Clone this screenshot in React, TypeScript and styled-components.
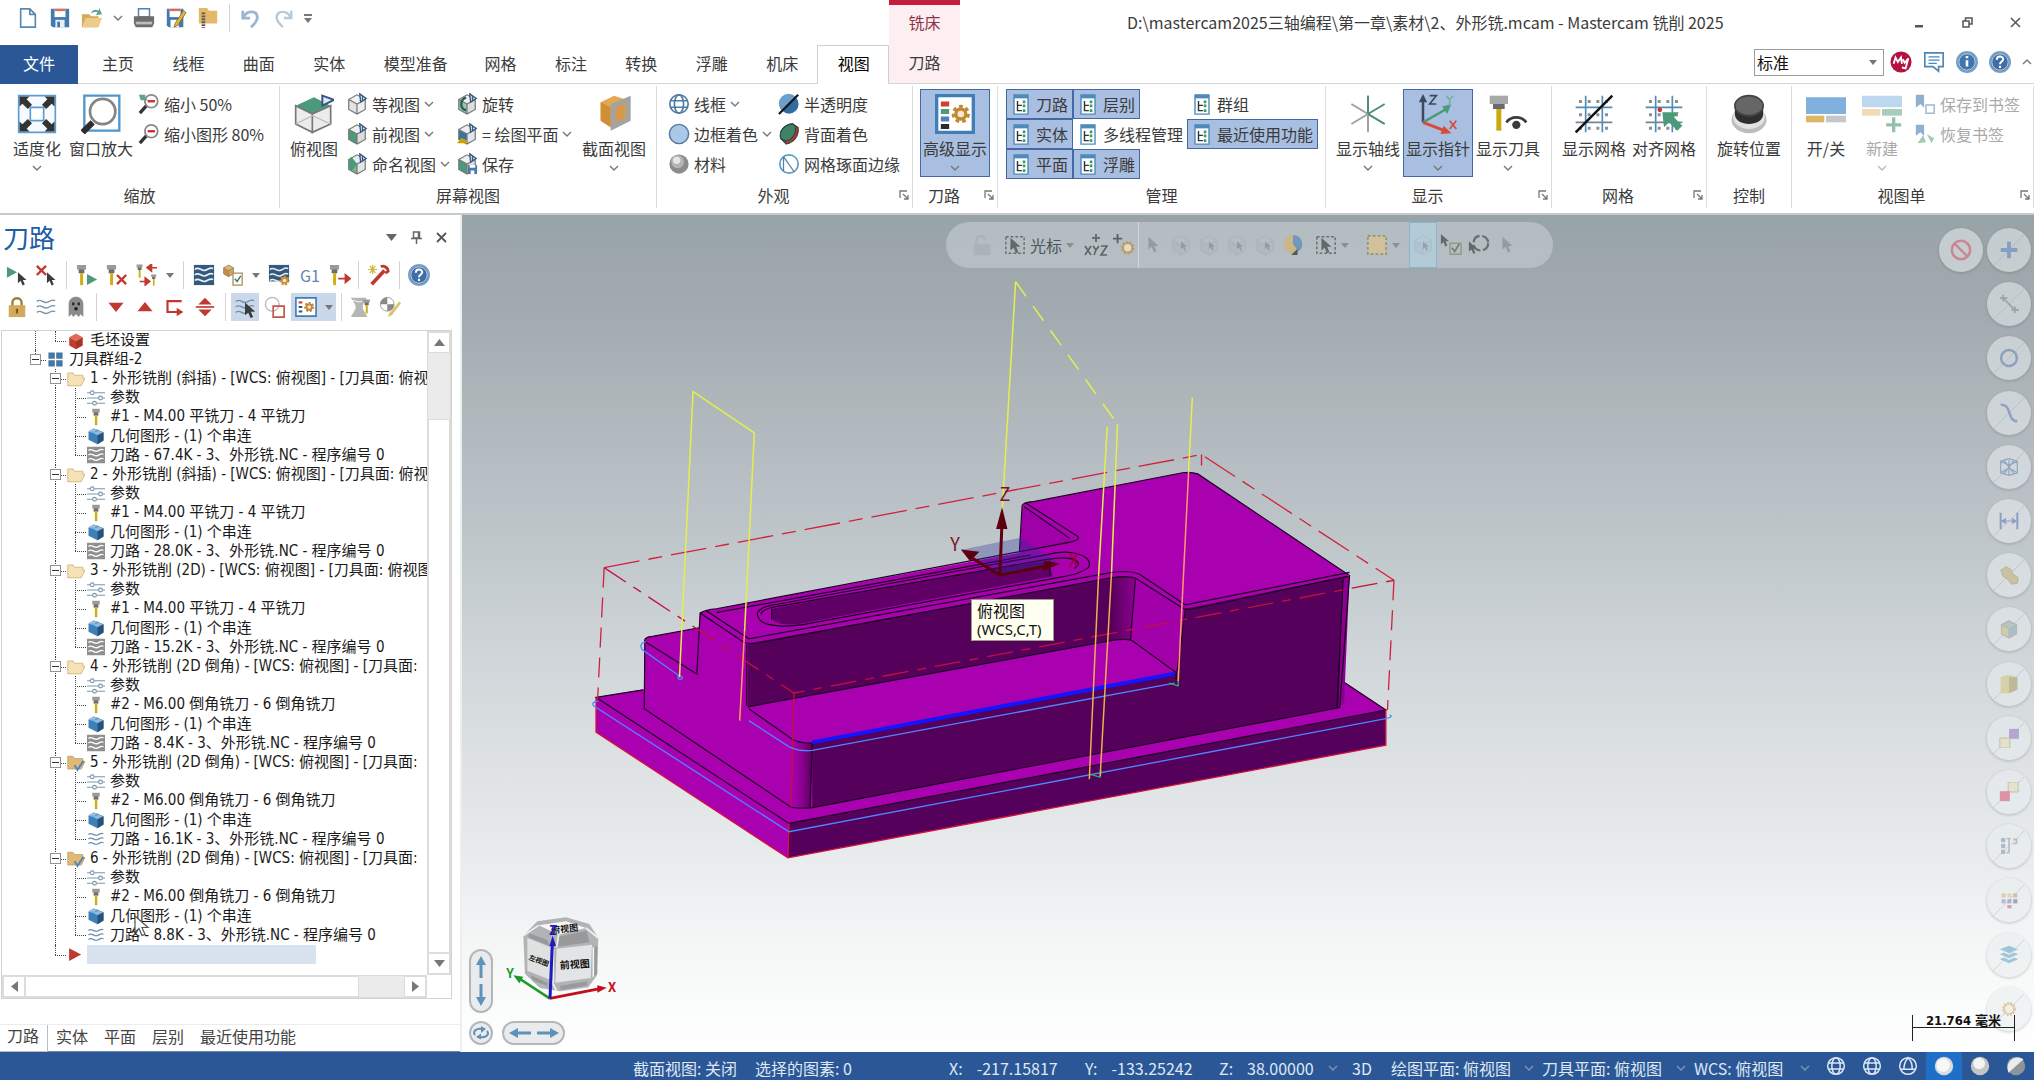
import React from 'react';
import styled, { createGlobalStyle, css } from 'styled-components';

const ui = '"Noto Sans CJK SC", "Noto Sans", sans-serif';
const treeFont = '"DejaVu Sans Condensed", "Noto Sans CJK SC", sans-serif';

const GlobalStyle = createGlobalStyle`
  *, *::before, *::after { box-sizing: border-box; }
  body { margin: 0; background: #fff; color: #3b3b3b; font: 16px/20px ${ui}; overflow: hidden; }
  button, select { font: inherit; color: inherit; background: none; border: 0; padding: 0; margin: 0; white-space: nowrap; }
  svg { display: block; flex: none; }
`;

/* ---------- icons ---------- */

const tool = (x = 0, y = 0) => (
  <g transform={`translate(${x} ${y})`}>
    <path d="M1 1h10v5H9v4H3V6H1z" fill="#9a9a9a" />
    <path d="M3 6h6v4H3z" fill="#6d6d6d" />
    <path d="M4.500 10h3.200v13H4.500z" fill="#cfae12" />
  </g>
);
const cube = (top: string, left: string, right: string) => (
  <>
    <path d="M3 7l9-5 9 5-9 5z" fill={top} />
    <path d="M3 7l9 5v11l-9-5z" fill={left} />
    <path d="M21 7l-9 5v11l9-5z" fill={right} />
    <path d="M3 7l9-5 9 5v11l-9 5-9-5zM3 7l9 5 9-5M12 12v11" fill="none" stroke="#777" strokeWidth="1.300" />
  </>
);
const eye = <path d="M15 1l7 5-6 4zM18 3v5" fill="#eef3f8" stroke="#385a80" strokeWidth="1.500" />;
const pointer = (x: number, y: number, s = 1) => (
  <path transform={`translate(${x} ${y}) scale(${s})`} d="M0 0v14l3.500-3 2.500 6 2.800-1.200L6.300 10H11z" fill="#3c3c3c" />
);
const waves = (stroke: string, w = 1.6) => (
  <path d="M2 6c4-4 7 2 11 1s5-4 9-2M2 12c4-4 7 2 11 1s5-4 9-2M2 18c4-4 7 2 11 1s5-4 9-2" fill="none" stroke={stroke} strokeWidth={w} />
);
const gear = (cx: number, cy: number, r: number, c = '#c08a35') => (
  <>
    <circle cx={cx} cy={cy} r={r + 1.5} fill="none" stroke={c} strokeWidth="2" strokeDasharray="2.200 1.800" />
    <circle cx={cx} cy={cy} r={r} fill="#f6ead2" stroke={c} strokeWidth="2" />
  </>
);
const globe = (c: string) => (
  <g fill="none" stroke={c} strokeWidth="1.800">
    <circle cx="12" cy="12" r="10" />
    <ellipse cx="12" cy="12" rx="5" ry="10" />
    <path d="M3 8.500h18M3 15.500h18" />
  </g>
);
const magnifier = (
  <>
    <path d="M2 22l8-9" stroke="#333" strokeWidth="3.600" />
    <circle cx="14.500" cy="9" r="7" fill="#fff" stroke="#8b8b8b" strokeWidth="2" />
    <path d="M10.500 9h8" stroke="#c9302c" strokeWidth="2.600" />
  </>
);
const gridDots = (
  <>
    <path d="M1 8h22M7 1v22M17 1v22" stroke="#4f8db8" strokeWidth="1" />
    <path d="M1 17h22" stroke="#6f8796" strokeWidth="1" />
    <path d="M3 4.500h19M3 12.500h19M3 20.500h19" stroke="#8d8d96" strokeWidth="1.800" strokeDasharray="1.800 3.400" />
  </>
);

const icons: Record<string, React.ReactNode> = {
  newFile: <path d="M4 2h10l6 6v14H4zM14 2v6h6" fill="#fff" stroke="#5c88b0" strokeWidth="1.800" />,
  save: <><path d="M2 2h20v20H4l-2-2z" fill="#4379ad" /><path d="M6 2h12v9H6z" fill="#fff" /><path d="M6 2h12v2.500H6z" fill="#e0694f" /><path d="M7 14h10v8H7z" fill="#e9eef3" /><path d="M9 16h3v6H9z" fill="#4379ad" /></>,
  open: <><path d="M1 8h8l2 2h8v12H1z" fill="#d9a95a" /><path d="M5 12h18l-4 10H1z" fill="#eccb8b" /><path d="M11 7c1-4 5-5 8-3l1-3 3 7-7 1 2-3c-3-1-5 0-7 1z" fill="#5fa58b" /></>,
  print: <><path d="M6 2h12v9H6z" fill="#fff" stroke="#4f82b5" strokeWidth="1.600" /><path d="M1 10h22v8l-2 4H3l-2-4z" fill="#6d6d6d" /><path d="M3 16h18v3H3z" fill="#bdbdbd" /></>,
  saveAs: <><path d="M2 2h18v20H4l-2-2z" fill="#4379ad" /><path d="M5 2h12v9H5z" fill="#fff" /><path d="M5 2h12v2.500H5z" fill="#e0694f" /><path d="M6 14h9v8H6z" fill="#fff" /><path d="M20 4l3 2-9 14-4 2 1-4z" fill="#e8b53c" stroke="#6e5a23" strokeWidth=".8" /></>,
  zip: <><path d="M2 1h9l2 3h9v14H2z" fill="#e3b868" /><path d="M7 6v17" stroke="#5a5a5a" strokeWidth="4" strokeDasharray="2 1.200" /></>,
  undo: <path d="M3 4v8h8M4 11c3-7 14-8 15 0 0 5-4 8-7 11" fill="none" stroke="#9bb6d3" strokeWidth="3" />,
  redo: <path d="M21 4v8h-8M20 11C17 4 6 3 5 11c0 5 4 8 7 11" fill="none" stroke="#b3c9dc" strokeWidth="2.600" />,
  fit: <><path d="M1 1h22v22H1z" fill="#f7fbff" stroke="#5d9bd3" strokeWidth="1" /><path d="M8 8h8v8H8z" fill="#fff" stroke="#5d9bd3" /><path d="M1.500 1.500h6L5.800 3.200 9 6.500 6.500 9 3.200 5.800 1.500 7.500zM22.500 1.500h-6l1.700 1.700L15 6.500 17.500 9l3.300-3.200 1.700 1.700zM1.500 22.500h6l-1.700-1.700L9 17.500 6.500 15l-3.300 3.200-1.700-1.700zM22.500 22.500h-6l1.700-1.700-3.200-3.300 2.500-2.500 3.300 3.200 1.700-1.700z" fill="#333" /></>,
  window: <><path d="M2 1h21v21H2z" fill="#fff" stroke="#4f97c8" strokeWidth="1.400" /><path d="M1 23l6-6" stroke="#2d2d2d" strokeWidth="3.600" /><circle cx="13" cy="10.500" r="7.600" fill="#fff" stroke="#848484" strokeWidth="1.600" /></>,
  zoom50: <>{magnifier}<path d="M1 2h7v3l3 3H3z" fill="#63a487" /></>,
  zoom80: magnifier,
  topView: <><path d="M1 7l11-5 10 5-11 5z" fill="#4c9a7a" /><path d="M1 7l10 5v11L1 18zM22 7l-11 5v11l11-5z" fill="#ececec" stroke="#777" strokeWidth="1" /><path d="M1 18l10-5 11 5" stroke="#bbb" fill="none" strokeWidth=".7" /><path d="M17 1l7 2.500-7 3.500z" fill="#dfe8f3" stroke="#38547f" strokeWidth="1.200" /></>,
  iso: <>{cube('#f4f4f4', '#e2e2e2', '#eee')}{eye}</>,
  front: <>{cube('#eee', '#4c9a7a', '#dcdcdc')}{eye}</>,
  named: <>{cube('#e6efe9', '#78b398', '#e5e5e5')}<path d="M6 4l6 8-6 8-3-2V7z" fill="#4c9a7a" />{eye}</>,
  rotate: <>{cube('#eee', '#9ec4b3', '#ddd')}<path d="M11 5c-7 2-7 12 0 14" fill="none" stroke="#2c5f52" strokeWidth="2.600" />{eye}</>,
  plane: <>{cube('#eee', '#3b72a6', '#dfe6ec')}<path d="M1 22l5-6 6 3v3z" fill="#c9a400" />{eye}</>,
  saveView: <>{cube('#eee', '#4c9a7a', '#ddd')}<path d="M13 13h10v10H13z" fill="#4b78ad" /><path d="M15 13h6v3h-6zM16 19h4v4h-4z" fill="#fff" />{eye}</>,
  section: <><path d="M4 5l8-4 6 2v13l-8 4-6-4z" fill="#e2a951" /><path d="M4 5l6 3v12l-6-4z" fill="#d08f35" /><path d="M10 6l12-5v15L10 22z" fill="#a3a3a3" /><path d="M13 8l6-2.500v9L13 17z" fill="#d89a4a" /></>,
  wire: globe('#4e7ba3'),
  edge: <circle cx="12" cy="12" r="10.500" fill="#a9c9e6" stroke="#56799c" strokeWidth="1.600" />,
  material: <><circle cx="12" cy="12" r="10.500" fill="#8c8c8c" /><circle cx="10.500" cy="9.500" r="7" fill="#b5b5b5" /><circle cx="9.500" cy="8" r="4" fill="#e6e6e6" /></>,
  translucent: <><circle cx="12" cy="12" r="10.500" fill="#2f6c9f" /><path d="M4 19A10.500 10.500 0 0 1 19 4z" fill="#6aa0cb" /><path d="M1 23L22 2" stroke="#161616" strokeWidth="2.400" /></>,
  back: <><path d="M3 17C1 9 6 2 16 1l6 4c1 9-4 16-13 18z" fill="#b23b31" stroke="#3a3a3a" strokeWidth="1.200" /><path d="M3 17C1 9 6 2 16 1l3 3c1 8-3 14-10 16z" fill="#3f8467" stroke="#28483c" strokeWidth="1.200" /></>,
  mesh: <><circle cx="12" cy="12" r="10" fill="#fff" stroke="#5b9bc9" strokeWidth="1.800" /><path d="M6 4l12 17M6 4v16" stroke="#5b7fa3" strokeWidth="1.400" /></>,
  advanced: <><path d="M1 1h22v22H1z" fill="#fff" stroke="#3f7fb5" strokeWidth="2" /><path d="M3.500 4.500h5v3h-5z" fill="#d2402e" /><path d="M3.500 9h5v3h-5z" fill="#4f9d78" /><path d="M3.500 13.500h5v3h-5z" fill="#4f82b5" /><path d="M3.500 18h5v3h-5z" fill="#2b2b2b" />{gear(15.5, 12, 3)}</>,
  axes: <><path d="M12 1v22M2 6l20 12" stroke="#a0a0a0" strokeWidth="1.200" /><path d="M12 1v11l10 6M12 12L22 6" stroke="#4c8f78" strokeWidth="1.200" fill="none" /><path d="M2 18l10-6" stroke="#a0a0a0" strokeWidth="1.200" /></>,
  gnomon: <><path d="M3 17V3" stroke="#3c4a5f" strokeWidth="1.500" /><path d="M3 0l2.500 5h-5z" fill="#3c4a5f" /><path d="M3 17L17 9" stroke="#4c9a7a" strokeWidth="1.500" /><path d="M20 6l-2.500 6-3-4.500z" fill="#4c9a7a" /><path d="M3 17l13 5" stroke="#d84a3a" strokeWidth="1.700" /><path d="M20 23.500l-6.500.5 2-5z" fill="#d84a3a" /><path d="M7 1h4L7 6h4" fill="none" stroke="#3c4a5f" /><path d="M17 1l2 2.500L21 1M19 3.500V7" fill="none" stroke="#7bb29a" /><path d="M19 16l4 5M23 16l-4 5" stroke="#d84a3a" /></>,
  showTool: <><path d="M1 1h11v5H1z" fill="#a9a9a9" /><path d="M3 6h7v3H3z" fill="#6a6a6a" /><path d="M5 9h3v13H5z" fill="#cba90c" /><path d="M11 17c3-4 9-4 12 0" fill="none" stroke="#3a3a3a" strokeWidth="1.600" /><circle cx="17" cy="18.500" r="2.500" fill="#3a3a3a" /></>,
  showGrid: <>{gridDots}<path d="M1 23L23 1" stroke="#111" strokeWidth="1.500" /></>,
  snapGrid: <>{gridDots}<circle cx="9.500" cy="9.500" r="1.400" fill="#c33" /><path d="M11 11h10l-3 3 5 5-3 3-5-5-3 3z" fill="#4c9a7a" /></>,
  knob: <><ellipse cx="12" cy="15.500" rx="10.500" ry="8" fill="#bdbdbd" /><ellipse cx="12" cy="14" rx="9.500" ry="7" fill="#e2e2e2" /><path d="M3.500 7v5c0 8 17 8 17 0V7z" fill="#2f2f2f" /><ellipse cx="12" cy="7" rx="8.500" ry="6" fill="#666" stroke="#444" /></>,
  sheets: <><path d="M0 2h24v10H0z" fill="#7fb0de" /><path d="M0 13h11v4H0z" fill="#dcb768" /><path d="M12 13h12v4H12z" fill="#c3c8cd" /></>,
  newSheet: <><path d="M0 1h24v7H0z" fill="#bdd7ee" /><path d="M0 9h11v4H0z" fill="#f0ddb5" /><path d="M12 9h12v4H12z" fill="#a9cdbd" /><path d="M19 14v9M14.500 18.500h9" stroke="#94c0ac" strokeWidth="2" /></>,
  bookSave: <><path d="M2 2h9v14l-4-4-5 4z" fill="#8fb0cf" /><path d="M13 13h9v9h-9z" fill="#fff" stroke="#9db9d3" strokeWidth="1.600" /></>,
  bookLoad: <><path d="M2 2h9v12l-4-4-5 4z" fill="#8fb0cf" /><path d="M4 22l6-9 3 8M14 12l8 5-3 5z" fill="#a3cab9" /></>,
  my: <><circle cx="12" cy="12" r="11.500" fill="#b5123e" /><path d="M4 14l2-7 2.500 5L12 7l1 7M14 9l2 4 4-5-3 11-4-1" fill="none" stroke="#fff" strokeWidth="2" /></>,
  chat: <><path d="M2 2h20v15H17v5l-6-5H2z" fill="#fff" stroke="#4d87b5" strokeWidth="1.800" /><path d="M6 6.500h12M6 10h12M6 13.500h9" stroke="#4d87b5" strokeWidth="1.300" /></>,
  info: <><circle cx="12" cy="12" r="11" fill="#3f76ad" stroke="#7aa2c8" strokeWidth="2" /><circle cx="12" cy="12" r="9" fill="none" stroke="#fff" strokeWidth=".8" /><path d="M12 10v7M12 5.500v2.500" stroke="#fff" strokeWidth="2.800" /></>,
  help: <><circle cx="12" cy="12" r="11" fill="#3f6ea5" stroke="#7aa2c8" strokeWidth="2" /><circle cx="12" cy="12" r="9" fill="none" stroke="#fff" strokeWidth=".8" /><path d="M8.500 9.500c0-4.500 7-4.500 7-.5 0 2.500-3.500 2.500-3.500 5.500M12 16v2.500" fill="none" stroke="#fff" strokeWidth="2.200" /></>,
  selAll: <><path d="M1 3l11 6-11 6z" fill="#4c9a7a" />{pointer(13, 9, 0.85)}</>,
  selNone: <><path d="M2 2l10 10M12 2L2 12" stroke="#c0392f" strokeWidth="2.600" />{pointer(13, 9, 0.85)}</>,
  toolGo: <>{tool(0, 0)}<path d="M12 11l11 6-11 6z" fill="#4c9a7a" /></>,
  toolX: <>{tool(0, 0)}<path d="M12 12l10 10M22 12L12 22" stroke="#c0392f" strokeWidth="2.600" /></>,
  toolSwap: <><g transform="scale(.65)">{tool(0, 0)}</g><g transform="translate(16 11) scale(.55)">{tool(0, 0)}</g><path d="M23 4h-8M12 4l5-4v8zM4 19h7M15 19l-5-4v8z" stroke="#c0392f" strokeWidth="1.600" fill="#c0392f" /></>,
  wavesDark: <><path d="M1 1h22v22H1z" fill="#35597d" />{waves('#e8f0f7', 1.8)}</>,
  verify: <><g transform="scale(.6)">{cube('#e3b868', '#c98f3c', '#d9a450')}</g><path d="M12 10h10v13H12z" fill="#fff" stroke="#a98d5f" strokeWidth="1.400" /><path d="M14 16l2.500 3 4-6" fill="none" stroke="#3b7c5c" strokeWidth="1.600" /></>,
  wavesGear: <><path d="M1 1h22v18H1z" fill="#35597d" />{waves('#e8f0f7', 1.6)}{gear(18, 18, 3, '#c98f3c')}</>,
  toolOut: <>{tool(0, 0)}<path d="M10 16h9M23 16l-5-4v8z" stroke="#c0392f" strokeWidth="2" fill="#c0392f" /></>,
  wrench: <><path d="M4 22L18 7" stroke="#c0392f" strokeWidth="4" /><path d="M14 3c3-2 8 1 8 5l-3 2" fill="none" stroke="#c0392f" strokeWidth="3" /><path d="M5 1v10M0 6h10M2 2l6 8M8 2l-6 8" stroke="#d0b73c" strokeWidth="1.300" /></>,
  lock: <><path d="M7 11V7c0-6 10-6 10 0v4" fill="none" stroke="#a57e35" strokeWidth="2.600" /><path d="M3 10h18v13H3z" fill="#d3a95b" /><path d="M12 14v5" stroke="#7a5a1e" strokeWidth="2.400" /></>,
  waves: waves('#7792ab', 1.5),
  ghost: <><path d="M4 23V9c0-11 16-11 16 0v14l-3-3-2 3-3-3-3 3-2-3z" fill="#8b8b8b" /><path d="M9 7v3M15 7v3" stroke="#222" strokeWidth="2.400" /><circle cx="12" cy="14" r="2" fill="#222" /></>,
  down: <path d="M3 7h18l-9 11z" fill="#c0392f" />,
  up: <path d="M3 17h18L12 6z" fill="#c0392f" />,
  insert: <><path d="M20 5H3v13h12" fill="none" stroke="#c0392f" strokeWidth="2.600" /><path d="M14 13l8 5-8 5z" fill="#c0392f" /></>,
  center: <><path d="M4 9h16l-8-8zM4 15h16l-8 8z" fill="#c0392f" /><path d="M1 12h22" stroke="#c0392f" strokeWidth="2" /></>,
  wavesPick: <>{waves('#6f8fae', 1.5)}{pointer(12, 7)}</>,
  overlap: <><circle cx="9" cy="9" r="7.500" fill="none" stroke="#b5b9be" strokeWidth="1.500" /><path d="M10 11h12v12H10z" fill="none" stroke="#c4544b" strokeWidth="1.800" /></>,
  display: <><path d="M1 2h22v20H1z" fill="#fff" stroke="#3f7fb5" strokeWidth="1.800" /><path d="M4 7h4" stroke="#c0392f" strokeWidth="2.200" /><path d="M4 12h4M4 17h4" stroke="#35597d" strokeWidth="2.200" />{gear(15.5, 12, 3)}</>,
  stockGray: <><path d="M1 2h17l-4 8v4l5 9H1l5-9v-4z" fill="#b5b5b5" /><path d="M2 6c3-3 5 2 11 0" fill="none" stroke="#fff" /><g transform="translate(14 3) scale(.7)">{tool()}</g></>,
  edit: <><circle cx="9" cy="9" r="7.500" fill="#fff" stroke="#999" /><path d="M9 1.500V9H1.500A7.500 7.500 0 0 1 9 1.500zM9 16.500V9h7.500A7.500 7.500 0 0 1 9 16.500z" fill="#888" /><path d="M22 6l2 2-10 13-4 2 1-4z" fill="#d9c46b" /></>,
  stock: <><path d="M3 7l9-5 9 5-9 5z" fill="#dd6b57" /><path d="M3 7l9 5v11l-9-5z" fill="#c23c2b" /><path d="M21 7l-9 5v11l9-5z" fill="#a93325" /></>,
  groups: <path d="M2 2h9v9H2zM13 2h9v9h-9zM2 13h9v9H2zM13 13h9v9h-9z" fill="#4577a3" />,
  folder: <path d="M1 4h7l2 3h11v4l3 0-5 10H1z" fill="#f6e3b5" stroke="#c9aa68" strokeWidth="1" />,
  folderOn: <><path d="M1 3h7l2 3h11v4l3 0-5 10H1z" fill="#dfb97a" stroke="#b9985f" strokeWidth="1" /><path d="M10 15l4 6 8-12" fill="none" stroke="#5b86b5" strokeWidth="2.800" /></>,
  params: <g fill="#fff" stroke="#7f95aa" strokeWidth="1.500"><path d="M0 5h24M0 12h24M0 19h24" /><circle cx="7" cy="5" r="2.500" /><circle cx="18" cy="12" r="2.500" /><circle cx="10" cy="19" r="2.500" /></g>,
  tool: <g transform="translate(6 0)">{tool()}</g>,
  geometry: <><path d="M2 6l7-4 6 2 7 3v11l-8 5-6-3-6-3z" fill="#3f7fb8" /><path d="M2 6l7-4 5 2-6 4z" fill="#8fbde2" /><path d="M8 8l7-3 7 2-8 4z" fill="#8fbde2" /><path d="M14 11l8-4v11l-8 5z" fill="#26527c" /></>,
  nc: <><path d="M0 1h24v22H0z" fill="#8f8f8f" />{waves('#fff', 1.8)}</>,
  ncOn: waves('#6f8fae', 1.7),
  insertPoint: <path d="M3 3l17 9-17 9z" fill="#c0392f" />,
  ball: <><circle cx="12" cy="12" r="11" fill="#d8dde2" /><circle cx="11" cy="11" r="8" fill="#f8f8f8" /></>,
  ballGray: <><circle cx="12" cy="12" r="11" fill="#c4c4c4" /><circle cx="11" cy="9" r="7" fill="#f4f4f4" /></>,
  ballHalf: <><circle cx="12" cy="12" r="11" fill="#8e9499" /><path d="M3 20C-2 8 10-3 21 4z" fill="#e9edf0" /></>,
  globeW: globe('#dce8f5'),
  globeW3: <g fill="none" stroke="#dce8f5" strokeWidth="1.800"><circle cx="12" cy="12" r="10" /><path d="M12 2c-5 6-5 10-5 14h10c0-5 0-9-5-14zM3 16h18" /></g>,
  unlock: <><path d="M6 11V6c0-5 9-5 9 0" fill="none" stroke="#8e969c" strokeWidth="2.400" /><path d="M3 11h18v12H3z" fill="#8e969c" /></>,
  boxPick: <><path d="M2 3h20v18H2z" fill="none" stroke="#444" strokeWidth="1.600" strokeDasharray="3 2.200" />{pointer(7, 4)}</>,
  xyz: <><path d="M12 1v8M8 5h8" stroke="#444" strokeWidth="2" /><path d="M1 13l6 9M7 13l-6 9M9 13l3 4 3-4M12 17l-2 5M17 13h6l-6 9h6" fill="none" stroke="#333" strokeWidth="1.600" /></>,
  plusGear: <><path d="M5 0v10M0 5h10" stroke="#333" strokeWidth="2" />{gear(16, 15, 5)}</>,
  pick: pointer(7, 3),
  solidPick: <><g opacity=".45">{cube('#c8cdd0', '#8f9a9f', '#a7b0b4')}</g>{pointer(12, 8, 0.6)}</>,
  colorPick: <><circle cx="12" cy="11" r="10" fill="#d9b36a" /><path d="M12 1a10 10 0 0 1 6 18l-6-8z" fill="#4f83ba" /><path d="M10 23h7v-7z" fill="#222" /></>,
  lasso: <path d="M2 2h20v20H2z" fill="#dfc58a" stroke="#8c7b4d" strokeWidth="2" strokeDasharray="3 2.400" />,
  pickOk: <>{pointer(1, 0, 0.8)}<path d="M11 10h12v12H11z" fill="none" stroke="#7d8b6d" strokeWidth="1.600" /><path d="M13 15l3 4 5-8" fill="none" stroke="#4d6b4d" strokeWidth="2" /></>,
  pickCycle: <><circle cx="14" cy="10" r="8" fill="none" stroke="#444" strokeWidth="2.400" strokeDasharray="10 3" />{pointer(1, 8, 0.8)}</>,
  no: <><circle cx="12" cy="12" r="10" fill="none" stroke="#d02538" strokeWidth="2.800" /><path d="M5 5l14 14" stroke="#d02538" strokeWidth="2.600" /></>,
  plus: <path d="M12 2v20M2 12h20" stroke="#1f5fae" strokeWidth="4.600" />,
  line: <path d="M6 6l13 13M1 5h9M5 1v8M15 19h9M19 15v8" stroke="#566" strokeWidth="2" />,
  circle: <circle cx="12" cy="12" r="9.500" fill="none" stroke="#3558a0" strokeWidth="3" />,
  spline: <path d="M2 2c14-1 7 20 20 20" fill="none" stroke="#3558a0" strokeWidth="3" />,
  meshBox: <path d="M2 5l10-3 10 3v14l-10 3-10-3zM2 5l10 5 10-5M2 19l10-6 10 6M12 4v18M6 4l12 16M18 4L6 20" fill="none" stroke="#2c5f95" strokeWidth="1.400" />,
  dim: <><path d="M2 2v20M22 2v20" stroke="#2747a0" strokeWidth="2.400" /><path d="M3 12h18M3 12l5-3v6zM21 12l-5-3v6z" stroke="#2747a0" fill="#2747a0" /></>,
  tag: <path d="M2 6l7-4 6 4 2 5 6 4-1 7-7 1-5-6-5-3z" fill="#b9974a" stroke="#7d6c3a" />,
  mesh2: <g>{cube('#7da08a', '#c1b14a', '#5f8ea0')}</g>,
  solid: <><path d="M2 4l10-3 10 3v15l-10 4H2z" fill="#cbb548" /><path d="M12 4h10v15l-10 4z" fill="#8f7a2c" /></>,
  levelUp: <><path d="M12 1h12v12H12z" fill="#6d4bb0" /><path d="M1 12h12v12H1z" fill="#e6dc9c" stroke="#7d7648" /></>,
  levelDown: <><path d="M11 0h12v12H11z" fill="#e6dc9c" stroke="#7d7648" /><path d="M1 11h12v12H1z" fill="#d2143c" /></>,
  props: <><path d="M3 3h4v4H3zM3 10h4v4H3zM3 17h4v4H3z" fill="#4a6f95" stroke="#4a6f95" /><path d="M9 3h5M12 3v17H9M17 4h4v5h-4" fill="none" stroke="#778" strokeWidth="2" /></>,
  palette: <><path d="M3 4h5v5H3z" fill="#c29b3f" /><path d="M10 4h5v5h-5z" fill="#c7b54c" /><path d="M17 4h5v5h-5z" fill="#b86f74" /><path d="M3 11h5v5H3z" fill="#7a64b0" /><path d="M10 11h5v5h-5z" fill="#4a5f9c" /><path d="M17 11h5v5h-5z" fill="#333a5c" /><path d="M10 18h5v4h-5z" fill="#c26" /></>,
  layers: <path d="M12 1l11 4-11 5L1 5zM1 11l5-2 6 3 6-3 5 2-11 5zM1 17l5-2 6 3 6-3 5 2-11 5z" fill="#2f83b5" />,
  gearBig: gear(12, 12, 6),
  panelTree: <><path d="M1 1h16v22H1z" fill="#fff" stroke="#4d8bbd" strokeWidth="1.600" /><path d="M1 1h16v4H1z" fill="#4d8bbd" /><path d="M5 8v11h5M5 13h5" stroke="#333" strokeWidth="1.600" fill="none" /><path d="M11 9h3M11 13.500h3M11 19h3" stroke="#3f9a66" strokeWidth="3" /></>,
};

const Icon = ({ n, s = 22, w }: { n: string; s?: number; w?: number }) => (
  <svg width={w ?? s} height={s} viewBox={w ? '0 0 18 24' : '0 0 24 24'} aria-hidden="true">{icons[n]}</svg>
);

const Chevron = ({ c = '#777', flip = false }: { c?: string; flip?: boolean }) => (
  <svg width="10" height="6" viewBox="0 0 10 6" aria-hidden="true"><path d={flip ? 'M1 5l4-4 4 4' : 'M1 1l4 4 4-4'} fill="none" stroke={c} strokeWidth="1.400" /></svg>
);
const Caret = () => <svg width="8" height="5" viewBox="0 0 8 5" aria-hidden="true"><path d="M0 0h8L4 5z" fill="#777" /></svg>;

/* ---------- window frame ---------- */

const Window = styled.div`display: flex; flex-direction: column; height: 100vh;`;

const Header = styled.header`
  display: grid; grid-template-columns: 889px 71px 1fr; height: 84px; flex: none;
  border-bottom: 1px solid #d5d5d5;
`;
const HeaderLeft = styled.div`display: flex; flex-direction: column; justify-content: space-between;`;
const QuickBar = styled.div`display: flex; align-items: center; height: 36px; padding-left: 17px; gap: 10px;`;
const Rule = styled.i<{ $h?: number }>`width: 1px; height: ${p => p.$h ?? 28}px; background: #d4d4d4; flex: none;`;
const Tabs = styled.nav`display: flex; height: 39px; margin-bottom: -1px;`;
const Tab = styled.button<{ $kind?: 'file' | 'on' }>`
  min-width: 70px; padding: 0 20px 4px; height: 39px;
  ${p => p.$kind === 'file' && css`width: 80px; margin-right: 4px; background: #2b5797; color: #fff;`}
  ${p => p.$kind === 'on' && css`color: #000; background: #fff; border: 1px solid #d0d0d0; border-bottom: 0;`}
`;
const Context = styled.div`
  display: flex; flex-direction: column; align-items: center; justify-content: space-between;
  border-top: 5px solid #c41e3a; background: #fceef1; padding-top: 7px; color: #8a3545;
`;
const ContextTab = styled.button`height: 38px; padding-bottom: 4px; color: #3b3b3b;`;
const HeaderRight = styled.div`display: flex; flex-direction: column;`;
const TitleRow = styled.div`
  display: flex; align-items: center; height: 44px; padding-right: 13px;
  h1 { margin: 0 0 0 167px; font: inherit; flex: 1; white-space: nowrap; }
`;
const WinButtons = styled.div`display: flex; gap: 37px;`;
const TopTools = styled.div`display: flex; justify-content: flex-end; align-items: center; height: 36px; gap: 11px; padding-right: 2px;`;
const SelectWrap = styled.div`
  display: grid; grid-template-columns: 1fr 14px; align-items: center; width: 130px; height: 27px; margin-right: -5px;
  border: 1px solid #9c9c9c; background: #fff;
  svg { grid-area: 1 / 2; pointer-events: none; }
`;
const SelectBox = styled.select`grid-area: 1 / 1 / 2 / 3; appearance: none; height: 25px; padding-left: 2px; color: #111;`;

/* ---------- ribbon ---------- */

const Ribbon = styled.section`
  display: flex; height: 131px; flex: none; padding-top: 2px; border-bottom: 2px solid #c3c9cd;
`;
const Group = styled.div<{ $w?: number; $pad?: number }>`
  display: flex; flex-direction: column; ${p => p.$w ? css`width: ${p.$w}px; flex: none;` : css`flex: 1;`}
  padding: 3px 0 0 ${p => p.$pad ?? 7}px; margin-bottom: 5px; border-right: 1px solid #dcdcdc;
`;
const GroupBody = styled.div`display: flex; height: 90px;`;
const GroupFoot = styled.div<{ $pad: number }>`
  display: flex; align-items: center; flex: 1; margin-left: -${p => p.$pad}px; margin-bottom: -2px;
  span { flex: 1; text-align: center; }
  button { width: 22px; display: flex; justify-content: flex-end; padding-right: 3px; }
`;
const Big = styled.button<{ $w?: number; $on?: boolean; $off?: boolean }>`
  width: ${p => p.$w ?? 70}px; height: 88px; display: flex; flex-direction: column; align-items: center; padding-top: 4px;
  border: 1px solid ${p => (p.$on ? '#4468a5' : 'transparent')}; background: ${p => (p.$on ? '#a9bfe1' : 'none')};
  color: ${p => (p.$off ? '#a9a9a9' : 'inherit')};
  span { margin: 4px -4px 7px; }
`;
const Col = styled.div`display: grid; grid-template-rows: repeat(3, 30px); justify-items: start;`;
const Small = styled.button<{ $off?: boolean }>`
  display: flex; align-items: center; gap: 4px; height: 30px; padding: 0 2px 0 4px; color: ${p => (p.$off ? '#a9a9a9' : 'inherit')};
`;
const ManageGrid = styled.div`
  display: grid; grid-template: repeat(3, 30px) / 67px 114px auto; justify-items: start; margin-left: 1px;
`;
const Toggle = styled.button<{ $on?: boolean }>`
  display: flex; align-items: center; gap: 7px; height: 30px; padding: 0 4px 0 6px;
  border: 1px solid ${p => (p.$on ? '#4468a5' : 'transparent')}; background: ${p => (p.$on ? '#a9bfe1' : 'none')};
`;

const BigButton = ({ n, t, w, on, off, drop, s = 40 }: { n: string; t: string; w?: number; on?: boolean; off?: boolean; drop?: boolean; s?: number }) => (
  <Big $w={w} $on={on} $off={off}><Icon n={n} s={s} /><span>{t}</span>{drop && <Chevron c={off ? '#bbb' : '#777'} />}</Big>
);
const SmallButton = ({ n, t, drop, off }: { n: string; t: string; drop?: boolean; off?: boolean }) => (
  <Small $off={off}><Icon n={n} /><span>{t}</span>{drop && <Chevron />}</Small>
);
const RibbonGroup = ({ t, w, pad = 7, launch, children }: { t: string; w?: number; pad?: number; launch?: boolean; children: React.ReactNode }) => (
  <Group $w={w} $pad={pad}>
    <GroupBody>{children}</GroupBody>
    <GroupFoot $pad={pad}>
      <span>{t}</span>
      {launch && <button aria-label={`${t} 设置`}><svg width="10" height="10" viewBox="0 0 10 10"><path d="M1 8V1h7M4 4l5 5M9 5v4H5" fill="none" stroke="#777" strokeWidth="1.300" /></svg></button>}
    </GroupFoot>
  </Group>
);

/* ---------- toolpath panel ---------- */

const Main = styled.main`display: flex; flex: 1; min-height: 0;`;
const Panel = styled.aside`
  position: relative; width: 462px; flex: none; display: flex; flex-direction: column; border-right: 2px solid #eceff0;
`;
const PanelHead = styled.div`
  display: flex; align-items: center; gap: 14px; height: 44px; padding: 0 13px 0 3px; flex: none; color: #666;
  h2 { margin: 0; flex: 1; font-weight: 400; font-size: 26px; line-height: 40px; color: #1f5da6; }
`;
const ToolRow = styled.div`display: flex; align-items: center; height: 32px; flex: none; padding-left: 4px;`;
const ToolButton = styled.button<{ $on?: boolean; $w?: number }>`
  display: flex; align-items: center; justify-content: center; gap: 8px; width: ${p => p.$w ?? 30}px; height: 28px;
  background: ${p => (p.$on ? '#cbd8ea' : 'none')}; color: #5f86ad;
`;
const ToolRule = styled(Rule)`margin: 0 5px;`;
const TreeBox = styled.div`
  display: grid; grid-template: 1fr 23px / 1fr 24px; flex: 1; min-height: 0;
  margin: 7px 8px 25px 1px; border: 1px solid #d3d3d3;
`;
const Tree = styled.div`
  overflow: hidden; padding-left: 28px; font-family: ${treeFont}; font-size: 15px; color: #1a1a1a; white-space: nowrap;
`;
const Operation = styled.div`display: grid; grid-template-rows: repeat(5, 1fr); height: 96px;`;
const Row = styled.div`display: flex; align-items: center; height: 19px; gap: 0;`;
const Label = styled.span`margin-left: 5px; line-height: 19px;`;
const Guide = styled.i<{ $v?: 'full' | 'half' | 'none'; $elbow?: boolean; $w?: number }>`
  position: relative; align-self: stretch; width: ${p => p.$w ?? 20}px; flex: none; display: flex; align-items: center;
  &::before { content: ''; position: absolute; left: 5px; top: 0; bottom: ${p => (p.$v === 'half' ? '50%' : '0')};
    border-left: ${p => (p.$v && p.$v !== 'none' ? '1px dotted #444' : '0')}; }
  &::after { content: ''; position: absolute; left: 5px; right: 1px; top: 50%; border-top: ${p => (p.$elbow ? '1px dotted #444' : '0')}; }
`;
const Expander = styled.button`
  position: relative; z-index: 1; width: 11px; height: 11px; border: 1px solid #929292; background: #fff;
  display: flex; align-items: center; justify-content: center;
  &::before { content: ''; width: 7px; height: 1px; background: #333; }
`;
const DropRow = styled.div`width: 229px; height: 19px; background: #d9e2ef; margin-left: 3px;`;
const VScroll = styled.div`display: flex; flex-direction: column; background: #ebebeb; border: 1px solid #dcdcdc;`;
const HScroll = styled.div`display: flex; background: #ebebeb; border: 1px solid #dcdcdc;`;
const ScrollButton = styled.button`
  width: 22px; height: 21px; flex: none; background: #fff; border: 1px solid #dcdcdc; display: flex; align-items: center; justify-content: center;
`;
const Thumb = styled.div`flex: 1; background: #fff; border: 1px solid #dcdcdc;`;
const Track = styled.div<{ $size: number }>`flex: 0 0 ${p => p.$size}px;`;
const PanelTabs = styled.div`display: flex; height: 28px; flex: none; border-top: 1px solid #ececec;`;
const PanelTab = styled.button<{ $on?: boolean }>`
  padding: 0 8px 6px; height: 27px; color: #444;
  ${p => p.$on && css`padding-left: 7px; border: 1px solid #b9bec3; border-top: 0; border-left: 0;`}
`;
const MousePointer = styled.svg`position: absolute; left: 134px; top: 700px;`;

/* ---------- viewport ---------- */

const Viewport = styled.section`
  position: relative; flex: 1; min-width: 0; overflow: hidden;
  background: linear-gradient(180deg, #98a3a7 0%, #a2abb1 12%, #aeb6ba 22%, #b7bec4 31%, #c3cacd 42%, #d0d6d9 53%, #dee2e4 66%, #eaedee 78%, #f6f8f8 89%, #ffffff 100%);
`;
const Model = styled.svg`position: absolute; left: 108px; top: 45px;`;
const Pill = styled.div`
  position: absolute; top: 7px; left: 3px; right: 0; margin: 0 auto; width: 607px; height: 46px; border-radius: 23px;
  display: flex; align-items: center; background: rgba(205, 213, 220, .5); padding: 0 25px 0 22px;
`;
const PillButton = styled.button<{ $w?: number; $on?: boolean; $faint?: boolean }>`
  width: ${p => p.$w ?? 28}px; height: 46px; display: flex; align-items: center; justify-content: center; gap: 4px; flex: none; color: #4d5559;
  ${p => p.$on && css`background: #b3cad7; border: 1px solid #88b4d2;`}
  & > svg { opacity: ${p => (p.$faint ? 0.25 : 0.65)}; }
`;
const SideTools = styled.div`
  position: absolute; top: 13px; right: 3px; height: 803px; display: grid; grid-template-columns: 44px 44px;
  column-gap: 4px; align-content: space-between; justify-items: end;
`;
const Round = styled.button<{ $first?: boolean }>`
  width: 44px; height: 44px; border-radius: 50%; grid-column: ${p => (p.$first ? 1 : 2)};
  background: rgba(232, 236, 238, .55); box-shadow: 0 1px 2px 1px rgba(90, 90, 90, .18);
  display: flex; align-items: center; justify-content: center;
  & > svg { opacity: .4; }
`;
const Tip = styled.div`
  position: absolute; left: 509px; top: 384px; width: 83px; height: 42px; padding-left: 5px;
  background: #fffff0; border: 1px solid #9c9c86; color: #111; font-size: 16px; white-space: nowrap;
  p { margin: 0; line-height: 20px; }
  p + p { font-family: "Noto Sans", sans-serif; font-size: 15px; line-height: 18px; }
`;
const Compass = styled.div`
  position: absolute; left: 7px; bottom: 7px; display: grid; grid-template: 64px 24px / 24px 63px; gap: 8px 9px;
`;
const NavButton = styled.button`
  border: 2px solid #b4b6b8; border-radius: 12px; background: #e9ebec; display: flex; align-items: center; justify-content: center;
`;
const CubeView = styled.svg`position: absolute; left: 42px; bottom: 48px;`;
const ScaleBar = styled.div`
  position: absolute; right: 19px; bottom: 11px; width: 103px; height: 26px; text-align: center;
  border: solid #222; border-width: 0 1px; color: #111; font: bold 13px/12px "DejaVu Sans Condensed", ${ui};
  &::after { content: ''; display: block; height: 1px; background: #222; }
`;

const B = '#a900b0';
const D = '#55005b';
const edge = { fill: 'none', stroke: '#1c0020', strokeWidth: 1.2, vectorEffect: 'non-scaling-stroke' as const };
const ray = (d: string, stroke: string, dash?: string, w = 1.3) => (
  <path d={d} fill="none" stroke={stroke} strokeWidth={w} strokeDasharray={dash} vectorEffect="non-scaling-stroke" />
);

const Part = () => (
  <Model width="850" height="620" viewBox="0 0 850 620" aria-label="零件模型">
    <defs>
      <linearGradient id="corner"><stop offset="0" stopColor={B} /><stop offset=".5" stopColor="#8d0093" /><stop offset="1" stopColor={D} /></linearGradient>
      <linearGradient id="fillet"><stop offset="0" stopColor={D} /><stop offset="1" stopColor="#8a0090" /></linearGradient>
    </defs>
    <g transform="scale(.54209 .39541)">
      <path d="M48 1106L140 1085 1428 1068 1505 1138 404 1425z" fill={B} />
      <path d="M48 1106L404 1425 402 1512 48 1194z" fill={B} />
      <path d="M404 1425L1505 1138V1227L402 1512z" fill={D} />
      <path d="M135 1087L48 1106 404 1425 1505 1138 1428 1068" {...edge} />

      <path d="M138 965Q136 953 152 952L238 930 240 893Q250 884 270 882L830 740 835 620Q840 610 860 610L1130 538Q1145 535 1158 541L1435 795 1420 1132 447 1385Q420 1388 408 1384L137 1135z" fill={B} />
      <path d="M447 1222L1118 1047 1135 882 1438 798 1420 1132 447 1385z" fill={D} />
      <path d="M413 1217L447 1222 443 1386 408 1384z" fill="url(#corner)" />
      <path d="M1426 808L1438 798 1428 1120 1418 1130z" fill="#8a0090" />
      <path d="M328 970L1000 803 1030 803 1032 960 328 1130z" fill={D} />
      <path d="M1000 803Q1025 797 1042 805L1034 960 998 962z" fill="url(#fillet)" />
      <path d="M1042 805L1135 882 1120 1047 1034 960z" fill="#a200a9" />
      <path d="M328 1130L1000 962Q1025 957 1036 962L1120 1045 447 1222Q425 1222 412 1214z" fill={B} />
      <path d="M835 626L925 706 925 713 829 737z" fill="#a000a7" />

      <path d="M347 902C340 885 360 874 385 870L880 745C930 728 968 752 956 778 945 790 930 797 905 802L430 922C385 930 352 925 347 902z" fill={B} {...edge} />
      <path d="M372 905V882L790 778 885 760 890 800 432 918C400 926 378 922 372 905z" fill="#600066" />
      <path d="M352 897C355 880 380 876 400 872L880 757C930 745 950 765 930 780M372 882V910M885 760V800" {...edge} />

      <path d="M138 965Q136 953 152 952L238 930M138 965L137 1135 408 1384Q425 1388 447 1385L1420 1132 1438 798 1158 541Q1145 535 1130 538L855 611Q835 612 834 622L829 737M138 965L234 1047 240 893Q250 884 270 882L925 713Q945 706 934 697L840 614M240 893L320 966Q330 972 345 969L1000 803Q1030 797 1045 806L1130 880Q1138 886 1150 882L1435 800M250 886L330 958 1000 790Q1030 784 1050 794L1135 872 1438 790M326 972V1128M328 1130L1000 962Q1025 957 1036 962L1120 1045M1043 808L1034 960M1135 885L1118 1060M330 1135L412 1214Q425 1222 447 1222L1118 1047M447 1222L443 1384M1426 808L1415 1134M270 892L850 746M838 624L922 704" {...edge} />

      {ray('M63 778L1165 492 1520 810', '#d2203c', '36 9 14 9')}
      {ray('M63 778L413 1095 1520 810', '#c4103c', '26 9 9 9')}
      {ray('M63 778L51 1110M1165 492V520M1520 810L1508 1138', '#d2203c', '20 10')}
      {ray('M413 1095L408 1384', '#c4103c')}
      {ray('M48 1106V1194L402 1512 1505 1227V1138M404 1425L402 1512', '#d4103c')}

      {ray('M447 1220L1115 1046', '#1414ff', undefined, 4)}
      {ray('M330 1165L405 1232Q425 1244 447 1240L1115 1070', '#4f86ff')}
      {ray('M52 1115Q38 1118 44 1128L404 1446 1505 1160Q1520 1156 1512 1150', '#4f86ff')}
      {ray('M140 965Q126 970 133 985L200 1050Q212 1056 205 1060 195 1062 202 1048', '#4f86ff')}
      {ray('M958 1300L978 1308 980 1290M1105 1070L1122 1077V1040', '#2fae6a')}

      {ray('M202 1055L227 333 340 437 330 720', '#e4f04a', undefined, 1.5)}
      {ray('M330 720L322 940', '#e4f04a', undefined, 1.5)}
      {ray('M322 940L313 1165', '#ff9a5a', undefined, 1.5)}
      {ray('M822 55L797 640', '#e4f04a', undefined, 1.5)}
      {ray('M822 55L1010 415', '#e4f04a', '18 12', 1.5)}
      {ray('M1010 415L999 790M991 422L975 800M1148 348L1141 540', '#e4f04a', undefined, 1.5)}
      {ray('M999 790L978 1305M975 800L958 1313', '#ecb24a', undefined, 1.5)}
      {ray('M1141 540L1122 1065', '#ff9a6a', undefined, 1.5)}

      <path d="M722 733L830 703 900 765 793 797z" fill="#24309a" opacity=".32" />
      {ray('M793 797L797 660M793 797L735 748M793 797L885 772', '#5c0010', undefined, 3)}
      <path d="M797 625L786 680H807zM721 732L755 738 738 762zM904 768L876 760 872 787z" fill="#5c0010" />
    </g>
    <g fontFamily={ui} fontSize="18" fill="#7b1224" textAnchor="middle">
      <text x="435" y="241">Z</text>
      <text x="385" y="291">Y</text>
      <text x="504" y="307" fill="#a0002c">X</text>
    </g>
  </Model>
);

const ViewCube = () => (
  <CubeView width="120" height="90" viewBox="0 0 120 90" aria-label="视图方向">
    <g transform="scale(.33333) translate(-132 -100)">
      <path d="M232 122L318 110 388 130 415 172 410 285 385 320 300 332 240 322 195 280 190 165z" fill="#b1b3b5" />
      <path d="M236 134L318 122 378 142 296 162z" fill="#f6f7f7" />
      <path d="M202 172L272 200V298L202 270z" fill="#dfe1e2" />
      <path d="M290 204L396 192 392 292 286 306z" fill="#e2e4e5" />
      <path d="M296 168L380 150 388 185 292 198zM208 158L262 178 268 196 205 170zM210 282L262 306V316L220 300zM298 316L382 302V314L304 328zM402 200L412 196V280L400 288z" fill="#97999b" />
      <path d="M190 165L236 134M290 200L296 162M415 172L378 142M275 300L290 332M400 200V288M280 204V304" stroke="#f1f2f2" strokeWidth="5" fill="none" />
      <path d="M270 354L180 295" stroke="#1c9a2c" strokeWidth="8" /><path d="M160 284L190 288 178 308z" fill="#1c9a2c" />
      <path d="M270 353L420 324" stroke="#c1101c" strokeWidth="8" /><path d="M440 321L412 314V336z" fill="#c1101c" />
      <path d="M270 354L277 190" stroke="#1d1bc0" strokeWidth="9" /><path d="M278 165L268 196H288z" fill="#1d1bc0" />
    </g>
    <g fontFamily={ui} fontWeight="700" textAnchor="middle">
      <text x="61" y="18" fontSize="9" fill="#111" transform="rotate(-6 61 18)">俯视图</text>
      <text x="34" y="49" fontSize="7" fill="#111" transform="rotate(20 34 49)">左视图</text>
      <text x="71" y="54" fontSize="10" fill="#111" transform="rotate(-4 71 54)">前视图</text>
      <text x="49" y="21" fontSize="13" fill="#1d1bc0">Z</text>
      <text x="6" y="64" fontSize="13" fill="#1c9a2c">Y</text>
      <text x="108" y="78" fontSize="13" fill="#c1101c">X</text>
    </g>
  </CubeView>
);

/* ---------- status bar ---------- */

const Status = styled.footer`
  display: grid; height: 29px; flex: none; align-items: center; padding-top: 4px; white-space: nowrap;
  grid-template-columns: 1fr 122px 194px 136px 134px 133px 39px 151px 152px 124px 216px;
  background: #2b5797; color: #dfe8f4; border-top: 1px solid #6c87ae; margin-top: -1px;
`;
const Coord = styled.span`display: flex; align-items: center; gap: 14px;`;
const PlaneButton = styled.button`display: flex; align-items: center; justify-content: space-between; padding-right: 8px;`;
const ModeIcons = styled.div`display: flex; height: 28px; margin-top: -4px;`;
const Mode = styled.button<{ $on?: boolean }>`
  width: 37px; display: flex; align-items: center; justify-content: center; background: ${p => (p.$on ? '#1f6fc9' : 'none')};
`;

/* ---------- data ---------- */

const operations = [
  { t: '1 - 外形铣削 (斜插) - [WCS: 俯视图] - [刀具面: 俯视图]', tool: '#1 - M4.00 平铣刀 - 4 平铣刀', size: '67.4K' },
  { t: '2 - 外形铣削 (斜插) - [WCS: 俯视图] - [刀具面: 俯视图]', tool: '#1 - M4.00 平铣刀 - 4 平铣刀', size: '28.0K' },
  { t: '3 - 外形铣削 (2D) - [WCS: 俯视图] - [刀具面: 俯视图]', tool: '#1 - M4.00 平铣刀 - 4 平铣刀', size: '15.2K' },
  { t: '4 - 外形铣削 (2D 倒角) - [WCS: 俯视图] - [刀具面:', tool: '#2 - M6.00 倒角铣刀 - 6 倒角铣刀', size: '8.4K' },
  { t: '5 - 外形铣削 (2D 倒角) - [WCS: 俯视图] - [刀具面:', tool: '#2 - M6.00 倒角铣刀 - 6 倒角铣刀', size: '16.1K', on: true },
  { t: '6 - 外形铣削 (2D 倒角) - [WCS: 俯视图] - [刀具面:', tool: '#2 - M6.00 倒角铣刀 - 6 倒角铣刀', size: '8.8K', on: true },
];
const tabs = ['主页', '线框', '曲面', '实体', '模型准备', '网格', '标注', '转换', '浮雕', '机床'];
const side = ['plus', 'line', 'circle', 'spline', 'meshBox', 'dim', 'tag', 'mesh2', 'solid', 'levelUp', 'levelDown', 'props', 'palette', 'layers', 'gearBig'];

const Leaf = ({ n, t, last }: { n: string; t: string; last?: boolean }) => (
  <Row><Guide /><Guide $v="full" /><Guide $w={17} $v={last ? 'half' : 'full'} $elbow /><Icon n={n} s={18} /><Label>{t}</Label></Row>
);

const arrow = (d: string) => <path d={d} fill="#5f92b8" />;

const App = () => (
  <Window>
    <GlobalStyle />
    <Header>
      <HeaderLeft>
        <QuickBar>
          <Icon n="newFile" /><Icon n="save" /><Icon n="open" /><Chevron /><Icon n="print" /><Icon n="saveAs" /><Icon n="zip" />
          <Rule /><Icon n="undo" /><Icon n="redo" />
          <svg width="8" height="9" viewBox="0 0 8 9"><path d="M0 0h8v2H0zM0 4h8L4 9z" fill="#777" /></svg>
        </QuickBar>
        <Tabs>
          <Tab $kind="file">文件</Tab>
          {tabs.map(t => <Tab key={t}>{t}</Tab>)}
          <Tab $kind="on">视图</Tab>
        </Tabs>
      </HeaderLeft>
      <Context><span>铣床</span><ContextTab>刀路</ContextTab></Context>
      <HeaderRight>
        <TitleRow>
          <h1>D:\mastercam2025三轴编程\第一章\素材\2、外形铣.mcam - Mastercam 铣削 2025</h1>
          <WinButtons>
            <button aria-label="最小化"><svg width="11" height="11" viewBox="0 0 11 11"><path d="M1 8h8v2.500H1z" fill="#555" /></svg></button>
            <button aria-label="还原"><svg width="11" height="11" viewBox="0 0 11 11"><path d="M1 4h6v6H1zM3.500 4V1H10v6H7" fill="none" stroke="#555" strokeWidth="1.500" /></svg></button>
            <button aria-label="关闭"><svg width="11" height="11" viewBox="0 0 11 11"><path d="M1 1l9 9M10 1l-9 9" stroke="#555" strokeWidth="1.500" /></svg></button>
          </WinButtons>
        </TitleRow>
        <TopTools>
          <SelectWrap><SelectBox aria-label="显示样式"><option>标准</option></SelectBox><Caret /></SelectWrap>
          <Icon n="my" /><Icon n="chat" /><Icon n="info" /><Icon n="help" /><Chevron flip />
        </TopTools>
      </HeaderRight>
    </Header>

    <Ribbon>
      <RibbonGroup t="缩放" w={280} pad={6}>
        <BigButton n="fit" t="适度化" w={62} drop /><BigButton n="window" t="窗口放大" w={66} />
        <Col><SmallButton n="zoom50" t="缩小 50%" /><SmallButton n="zoom80" t="缩小图形 80%" /></Col>
      </RibbonGroup>
      <RibbonGroup t="屏幕视图" w={377} pad={6}>
        <BigButton n="topView" t="俯视图" w={56} />
        <Col><SmallButton n="iso" t="等视图" drop /><SmallButton n="front" t="前视图" drop /><SmallButton n="named" t="命名视图" drop /></Col>
        <Col><SmallButton n="rotate" t="旋转" /><SmallButton n="plane" t="= 绘图平面" drop /><SmallButton n="saveView" t="保存" /></Col>
        <BigButton n="section" t="截面视图" w={79} drop />
      </RibbonGroup>
      <RibbonGroup t="外观" w={256} launch>
        <Col><SmallButton n="wire" t="线框" drop /><SmallButton n="edge" t="边框着色" drop /><SmallButton n="material" t="材料" /></Col>
        <Col><SmallButton n="translucent" t="半透明度" /><SmallButton n="back" t="背面着色" /><SmallButton n="mesh" t="网格琢面边缘" /></Col>
      </RibbonGroup>
      <RibbonGroup t="刀路" w={85} launch><BigButton n="advanced" t="高级显示" on drop /></RibbonGroup>
      <RibbonGroup t="管理" w={328}>
        <ManageGrid>
          {([['刀路', 1], ['层别', 1], ['群组', 0], ['实体', 1], ['多线程管理', 0], ['最近使用功能', 1], ['平面', 1], ['浮雕', 1]] as [string, number][]).map(([t, on]) => (
            <Toggle key={t} $on={!!on} aria-pressed={!!on}><Icon n="panelTree" s={21} w={16} /><span>{t}</span></Toggle>
          ))}
        </ManageGrid>
      </RibbonGroup>
      <RibbonGroup t="显示" w={226} launch>
        <BigButton n="axes" t="显示轴线" drop /><BigButton n="gnomon" t="显示指针" on drop /><BigButton n="showTool" t="显示刀具" drop />
      </RibbonGroup>
      <RibbonGroup t="网格" w={155} launch><BigButton n="showGrid" t="显示网格" /><BigButton n="snapGrid" t="对齐网格" /></RibbonGroup>
      <RibbonGroup t="控制" w={85}><BigButton n="knob" t="旋转位置" /></RibbonGroup>
      <RibbonGroup t="视图单" pad={6} launch>
        <BigButton n="sheets" t="开/关" w={56} /><BigButton n="newSheet" t="新建" w={56} off drop />
        <Col><SmallButton n="bookSave" t="保存到书签" off /><SmallButton n="bookLoad" t="恢复书签" off /></Col>
      </RibbonGroup>
    </Ribbon>

    <Main>
      <Panel>
        <PanelHead>
          <h2>刀路</h2>
          <button aria-label="菜单"><svg width="11" height="7" viewBox="0 0 11 7"><path d="M0 0h11L5.500 7z" fill="#666" /></svg></button>
          <button aria-label="固定"><svg width="11" height="13" viewBox="0 0 11 13"><path d="M2.500 1h6v6h-6zM0 7.500h11M5.500 8v5M7.500 1v6" fill="none" stroke="#666" strokeWidth="1.500" /></svg></button>
          <button aria-label="关闭面板"><svg width="11" height="11" viewBox="0 0 11 11"><path d="M1 1l9 9M10 1l-9 9" stroke="#555" strokeWidth="1.800" /></svg></button>
        </PanelHead>
        <ToolRow>
          <ToolButton $w={26}><Icon n="selAll" /></ToolButton><ToolButton $w={31}><Icon n="selNone" /></ToolButton><ToolRule />
          <ToolButton><Icon n="toolGo" /></ToolButton><ToolButton><Icon n="toolX" /></ToolButton><ToolButton $w={46}><Icon n="toolSwap" /><Caret /></ToolButton><ToolRule />
          <ToolButton $w={29}><Icon n="wavesDark" /></ToolButton><ToolButton $w={46}><Icon n="verify" /><Caret /></ToolButton>
          <ToolButton><Icon n="wavesGear" /></ToolButton><ToolButton $w={32}>G1</ToolButton><ToolButton $w={27}><Icon n="toolOut" /></ToolButton><ToolRule />
          <ToolButton><Icon n="wrench" /></ToolButton><ToolRule /><ToolButton $w={28}><Icon n="help" /></ToolButton>
        </ToolRow>
        <ToolRow>
          <ToolButton $w={26}><Icon n="lock" /></ToolButton><ToolButton $w={31}><Icon n="waves" /></ToolButton><ToolButton><Icon n="ghost" /></ToolButton><ToolRule />
          <ToolButton $w={28}><Icon n="down" s={20} /></ToolButton><ToolButton><Icon n="up" s={20} /></ToolButton><ToolButton><Icon n="insert" s={20} /></ToolButton><ToolButton><Icon n="center" s={20} /></ToolButton><ToolRule />
          <ToolButton $on $w={28}><Icon n="wavesPick" /></ToolButton><ToolButton $w={32}><Icon n="overlap" /></ToolButton><ToolButton $on $w={45}><Icon n="display" /><Caret /></ToolButton><ToolRule />
          <ToolButton $w={28}><Icon n="stockGray" /></ToolButton><ToolButton><Icon n="edit" /></ToolButton>
        </ToolRow>
        <TreeBox>
          <Tree>
            <Row><Guide $v="full" /><Guide $w={17} $v="half" $elbow /><Icon n="stock" s={18} /><Label>毛坯设置</Label></Row>
            <Row><Guide $w={17} $v="half" $elbow><Expander aria-label="折叠" /></Guide><Icon n="groups" s={17} /><Label>刀具群组-2</Label></Row>
            {operations.map(o => (
              <Operation key={o.t}>
                <Row><Guide /><Guide $w={17} $v="full" $elbow><Expander aria-label="折叠" /></Guide><Icon n={o.on ? 'folderOn' : 'folder'} s={18} /><Label>{o.t}</Label></Row>
                <Leaf n="params" t="参数" />
                <Leaf n="tool" t={o.tool} />
                <Leaf n="geometry" t="几何图形 - (1) 个串连" />
                <Leaf n={o.on ? 'ncOn' : 'nc'} t={`刀路 - ${o.size} - 3、外形铣.NC - 程序编号 0`} last />
              </Operation>
            ))}
            <Row><Guide /><Guide $w={17} $v="half" $elbow /><Icon n="insertPoint" s={17} /><DropRow /></Row>
          </Tree>
          <VScroll>
            <ScrollButton aria-label="向上"><svg width="11" height="7" viewBox="0 0 11 7"><path d="M0 7h11L5.500 0z" fill="#777" /></svg></ScrollButton>
            <Track $size={66} /><Thumb />
            <ScrollButton aria-label="向下"><svg width="11" height="7" viewBox="0 0 11 7"><path d="M0 0h11L5.500 7z" fill="#777" /></svg></ScrollButton>
          </VScroll>
          <HScroll>
            <ScrollButton aria-label="向左"><svg width="7" height="11" viewBox="0 0 7 11"><path d="M7 0v11L0 5.500z" fill="#777" /></svg></ScrollButton>
            <Thumb /><Track $size={45} />
            <ScrollButton aria-label="向右"><svg width="7" height="11" viewBox="0 0 7 11"><path d="M0 0v11l7-5.500z" fill="#777" /></svg></ScrollButton>
          </HScroll>
        </TreeBox>
        <PanelTabs>
          <PanelTab $on>刀路</PanelTab><PanelTab>实体</PanelTab><PanelTab>平面</PanelTab><PanelTab>层别</PanelTab><PanelTab>最近使用功能</PanelTab>
        </PanelTabs>
        <MousePointer width="16" height="22" viewBox="0 0 16 22"><path d="M1 1v16l4-3.500 3 7 3-1.200-3-6.800h6z" fill="#fff" stroke="#555" strokeWidth="1.200" /></MousePointer>
      </Panel>

      <Viewport>
        <Part />
        <Tip><p>俯视图</p><p>(WCS,C,T)</p></Tip>
        <Pill>
          <PillButton $faint><Icon n="unlock" /></PillButton>
          <PillButton $w={86}><Icon n="boxPick" /><span>光标</span><Caret /></PillButton>
          <PillButton><Icon n="xyz" s={24} /></PillButton>
          <PillButton><Icon n="plusGear" /></PillButton>
          <Rule $h={46} />
          <PillButton $faint><Icon n="pick" /></PillButton>
          <PillButton $faint><Icon n="solidPick" /></PillButton><PillButton $faint><Icon n="solidPick" /></PillButton>
          <PillButton $faint><Icon n="solidPick" /></PillButton><PillButton $faint><Icon n="solidPick" /></PillButton>
          <PillButton><Icon n="colorPick" /></PillButton>
          <PillButton $w={50}><Icon n="boxPick" /><Caret /></PillButton>
          <PillButton $w={52}><Icon n="lasso" /><Caret /></PillButton>
          <PillButton $on $faint><Icon n="solidPick" /></PillButton>
          <PillButton><Icon n="pickOk" /></PillButton><PillButton><Icon n="pickCycle" /></PillButton><PillButton $faint><Icon n="pick" /></PillButton>
        </Pill>
        <SideTools>
          <Round $first aria-label="no"><Icon n="no" /></Round>
          {side.map(n => (
            <Round key={n} aria-label={n}>
              <svg width="44" height="44" viewBox="0 0 44 44"><path d="M6 38L37 7" stroke="#999" strokeWidth=".8" /><svg x="12" y="12" width="20" height="20" viewBox="0 0 24 24">{icons[n]}</svg></svg>
            </Round>
          ))}
        </SideTools>
        <ViewCube />
        <Compass>
          <NavButton aria-label="上下旋转"><svg width="10" height="50" viewBox="0 0 10 50">{arrow('M5 0l5 9H6.500v13h-3V9H0zM5 50l5-9H6.500V28h-3v13H0z')}</svg></NavButton><span />
          <NavButton aria-label="旋转"><svg width="18" height="14" viewBox="0 0 18 14"><path d="M3 9C0 5 5 2 10 3M15 5c3 4-2 7-7 6" fill="none" stroke="#5f92b8" strokeWidth="2" />{arrow('M9 0l5 3-5 4zM9 7.500v6L4 11z')}</svg></NavButton>
          <NavButton aria-label="左右旋转"><svg width="50" height="10" viewBox="0 0 50 10">{arrow('M0 5l9-5v3.500h13v3H9V10zM50 5l-9-5v3.500H28v3h13V10z')}</svg></NavButton>
        </Compass>
        <ScaleBar>21.764 毫米</ScaleBar>
      </Viewport>
    </Main>

    <Status>
      <span />
      <span>截面视图: 关闭</span><span>选择的图素: 0</span>
      <Coord><span>X:</span><span>-217.15817</span></Coord>
      <Coord><span>Y:</span><span>-133.25242</span></Coord>
      <Coord><span>Z:</span><span>38.00000</span><Chevron c="#7d93b5" /></Coord>
      <span>3D</span>
      <PlaneButton>绘图平面: 俯视图<Chevron c="#7d93b5" /></PlaneButton>
      <PlaneButton>刀具平面: 俯视图<Chevron c="#7d93b5" /></PlaneButton>
      <PlaneButton>WCS: 俯视图<Chevron c="#7d93b5" /></PlaneButton>
      <ModeIcons>
        {['globeW', 'globeW', 'globeW3', 'ball', 'ballGray', 'ballHalf'].map((n, i) => <Mode key={i} $on={n === 'ball'} aria-label={`着色 ${i + 1}`}><Icon n={n} s={20} /></Mode>)}
      </ModeIcons>
    </Status>
  </Window>
);

export default App;
